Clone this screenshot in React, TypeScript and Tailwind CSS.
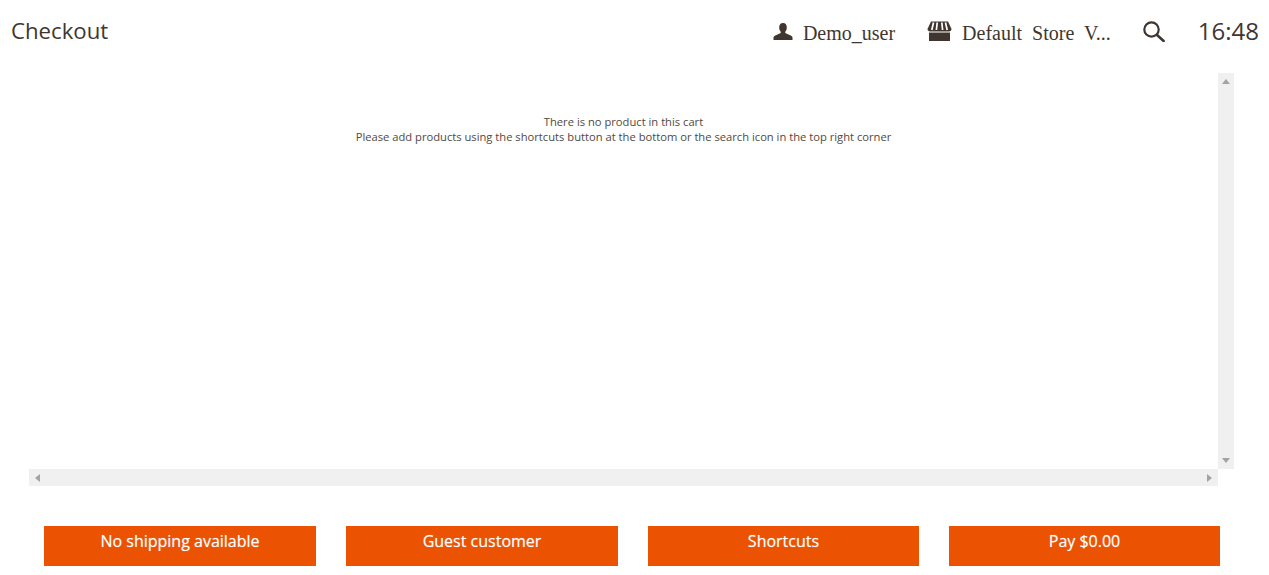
function UserIcon() {
  return (
    <svg width="20" height="18" viewBox="0 0 20 18" className="text-[#41362f] mt-[2px]" fill="currentColor">
      <path d="M10 0c2.600 0 3.800 1.900 3.800 4.400 0 1.800-.6 3.200-1.400 4.200-.4.500-.3 1.300.3 1.600l5 2.400c1.200.6 1.800 1.200 1.800 2.400V17H.5v-2c0-1.200.6-1.800 1.800-2.400l5-2.400c.6-.3.700-1.100.3-1.600C6.800 7.600 6.200 6.200 6.200 4.400 6.200 1.900 7.400 0 10 0z" />
    </svg>
  );
}

function StoreIcon() {
  return (
    <svg width="25" height="20" viewBox="0 0 25 20" className="text-[#41362f]" fill="none">
      <path d="M4 .5h17l3.500 7.500c0 1.500-1.200 2.500-2.400 2.500H2.900C1.700 10.500.5 9.500.5 8z" fill="currentColor" />
      <path d="M6.500 1.500 4.800 9M10.200 1.500 9.400 9M14.800 1.500 15.600 9M18.500 1.500 20.200 9" stroke="#fff" strokeWidth="1.700" />
      <path d="M2 11.500h21V20H2z" fill="currentColor" />
    </svg>
  );
}

function SearchIcon() {
  return (
    <svg width="22" height="21" viewBox="0 0 22 21" className="text-[#41362f] ml-[32px] mt-[5px]" fill="none" stroke="currentColor">
      <circle cx="8.500" cy="8.500" r="7.200" strokeWidth="2.200" />
      <path d="M13.800 13.800 20.600 20" strokeWidth="2.600" strokeLinecap="round" />
    </svg>
  );
}

function ScrollArrow({ dir }: { dir: 'up' | 'down' | 'left' | 'right' }) {
  const points = {
    up: '0,5 4,0 8,5',
    down: '0,0 8,0 4,5',
    left: '5,0 5,8 0,4',
    right: '0,0 0,8 5,4',
  }[dir];
  const horizontal = dir === 'left' || dir === 'right';
  return (
    <svg width={horizontal ? 5 : 8} height={horizontal ? 8 : 5} viewBox={horizontal ? '0 0 5 8' : '0 0 8 5'}>
      <polygon points={points} fill="#a3a3a3" />
    </svg>
  );
}

function ActionButton({ label }: { label: string }) {
  return (
    <button className="h-10 bg-[#eb5202] text-white text-base leading-[30px] pb-[10px] [text-shadow:0_0_1px_rgba(255,255,255,0.5)]">
      {label}
    </button>
  );
}

export default function App() {
  return (
    <div className="h-[575px] w-[1269px] overflow-hidden bg-white flex flex-col font-['Open_Sans',sans-serif] text-[#41362f]">
      {/* Header */}
      <header className="h-[73px] shrink-0 flex pl-[11px] pr-[10px]">
        <h1 className="text-[22.2px] leading-[30px] pt-[16px] font-normal">Checkout</h1>
        <div className="ml-auto flex items-start pt-[16px]">
          <div className="flex items-center h-[30px] gap-[10px]">
            <UserIcon />
            <span className="font-['Liberation_Serif',serif] text-[20px] leading-[30px] pt-[4px]">Demo_user</span>
          </div>
          <div className="flex items-center h-[30px] gap-[10px] ml-[32px]">
            <StoreIcon />
            <span className="font-['Liberation_Serif',serif] text-[20px] leading-[30px] pt-[4px] [word-spacing:5px]">
              Default Store V...
            </span>
          </div>
          <SearchIcon />
          <span className="ml-[33px] text-2xl leading-[30px]">16:48</span>
        </div>
      </header>

      {/* Cart area */}
      <div className="h-[413px] w-[1205px] ml-[29px] shrink-0 flex flex-col">
        <div className="flex-1 flex min-h-0">
          <div className="flex-1 pt-[41px] text-center text-[11.2px] leading-[15px] text-[#514943]">
            <p>There is no product in this cart</p>
            <p>Please add products using the shortcuts button at the bottom or the search icon in the top right corner</p>
          </div>
          <div className="w-4 bg-[#f0f0f0] flex flex-col items-center justify-between py-[6px]">
            <ScrollArrow dir="up" />
            <ScrollArrow dir="down" />
          </div>
        </div>
        <div className="h-[17px] w-[1189px] shrink-0 bg-[#f0f0f0] flex items-center justify-between px-[6px]">
          <ScrollArrow dir="left" />
          <ScrollArrow dir="right" />
        </div>
      </div>

      {/* Actions */}
      <div className="mt-[40px] ml-[44px] w-[1176px] grid grid-cols-[272px_272px_271px_271px] gap-[30px]">
        <ActionButton label="No shipping available" />
        <ActionButton label="Guest customer" />
        <ActionButton label="Shortcuts" />
        <ActionButton label="Pay $0.00" />
      </div>
    </div>
  );
}
